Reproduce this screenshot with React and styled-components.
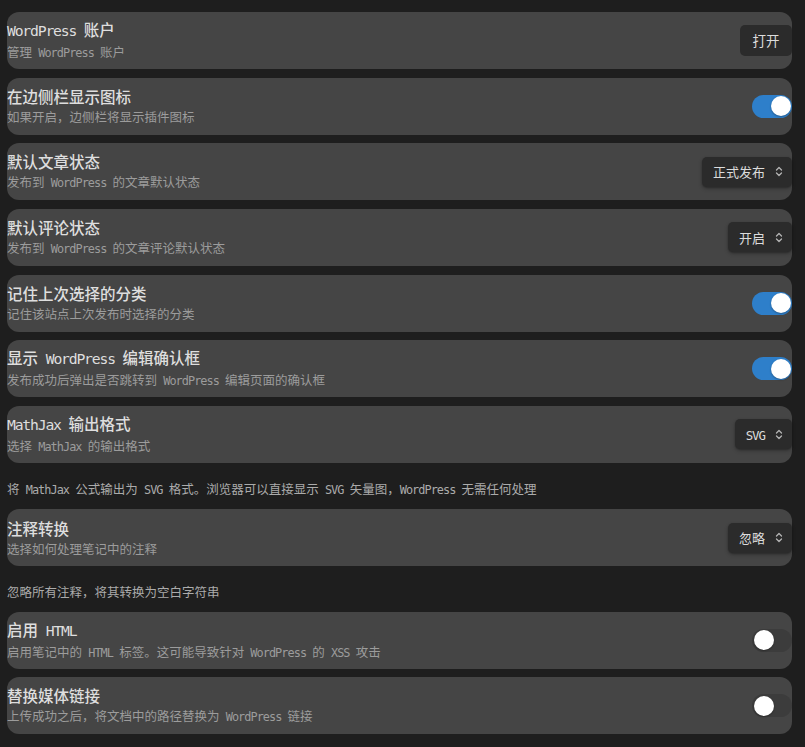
import React from 'react';
import styled, { createGlobalStyle } from 'styled-components';

const Global = createGlobalStyle`
  html, body { margin: 0; padding: 0; background: #1e1e1e; }
  body { font-family: "Noto Sans CJK SC", "DejaVu Sans Mono", sans-serif; }
  * { box-sizing: border-box; }
`;

const Page = styled.div`
  display: flex;
  flex-direction: column;
  gap: 8.67px;
  padding: 12px 13px 12px 7px;
`;

const Card = styled.div`
  display: flex;
  align-items: center;
  justify-content: space-between;
  background: #454545;
  border-radius: 12px;
  height: 57px;
`;

const Info = styled.div`
  display: flex;
  flex-direction: column;
  min-width: 0;
`;

const Name = styled.div`
  font-size: 15.5px;
  font-weight: 500;
  line-height: 20px;
  color: #dedede;
  white-space: nowrap;
`;

const Desc = styled.div`
  font-size: 12.5px;
  line-height: 18px;
  margin-top: 2px;
  color: #9c9c9c;
  white-space: nowrap;
`;

const Note = styled.div`
  font-size: 12.5px;
  line-height: 18px;
  padding: 8px 0 2px;
  color: #ababab;
  white-space: nowrap;
`;

const Latin = styled.span`
  font-family: "DejaVu Sans Mono", monospace;
  font-weight: 400;
  font-size: 0.95em;
  letter-spacing: -0.08em;
`;

const Button = styled.div`
  display: flex;
  align-items: center;
  height: 31px;
  padding: 0 12.5px;
  background: #2b2b2b;
  border-radius: 5px;
  color: #dcdcdc;
  font-size: 13.5px;
  flex-shrink: 0;
  margin-bottom: 1px;
`;

const Select = styled.div`
  display: flex;
  align-items: center;
  gap: 10px;
  height: 30px;
  padding: 0 9px 0 10.5px;
  background: #2b2b2b;
  border-radius: 5px;
  color: #dcdcdc;
  font-size: 13px;
  flex-shrink: 0;
  box-shadow: 0 2px 4px rgba(0, 0, 0, 0.2), 0 1px 2px rgba(0, 0, 0, 0.25);
`;

const Track = styled.div`
  display: flex;
  align-items: center;
  justify-content: ${(p) => (p.$on ? 'flex-end' : 'flex-start')};
  width: 40px;
  height: 23px;
  padding: 0 1.5px;
  border-radius: 12px;
  background: ${(p) => (p.$on ? '#2e7fca' : '#3c3c3c')};
  flex-shrink: 0;
`;

const Knob = styled.div`
  width: 20px;
  height: 20px;
  border-radius: 50%;
  background: #ffffff;
  box-shadow: 0 1px 2px rgba(0, 0, 0, 0.3);
`;

function Mixed({ text }) {
  return text
    .split(/([\x20-\x7E]+)/)
    .filter(Boolean)
    .map((p, i) => (/^[\x20-\x7E]+$/.test(p) ? <Latin key={i}>{p}</Latin> : <React.Fragment key={i}>{p}</React.Fragment>));
}

const Chevrons = () => (
  <svg width="8" height="11" viewBox="0 0 8 11" fill="none" stroke="#b4b4b4" strokeWidth="1.3" strokeLinecap="round" strokeLinejoin="round">
    <path d="M1.5 4 L4 1.5 L6.5 4" />
    <path d="M1.5 7 L4 9.5 L6.5 7" />
  </svg>
);

function Control({ c }) {
  if (c.type === 'button') return <Button>{c.label}</Button>;
  if (c.type === 'select')
    return (
      <Select>
        <span><Mixed text={c.value} /></span>
        <Chevrons />
      </Select>
    );
  return (
    <Track $on={c.on}>
      <Knob />
    </Track>
  );
}

const rows = [
  { name: 'WordPress 账户', desc: '管理 WordPress 账户', c: { type: 'button', label: '打开' } },
  { name: '在边侧栏显示图标', desc: '如果开启，边侧栏将显示插件图标', c: { type: 'toggle', on: true } },
  { name: '默认文章状态', desc: '发布到 WordPress 的文章默认状态', c: { type: 'select', value: '正式发布' } },
  { name: '默认评论状态', desc: '发布到 WordPress 的文章评论默认状态', c: { type: 'select', value: '开启' } },
  { name: '记住上次选择的分类', desc: '记住该站点上次发布时选择的分类', c: { type: 'toggle', on: true } },
  { name: '显示 WordPress 编辑确认框', desc: '发布成功后弹出是否跳转到 WordPress 编辑页面的确认框', c: { type: 'toggle', on: true } },
  {
    name: 'MathJax 输出格式',
    desc: '选择 MathJax 的输出格式',
    c: { type: 'select', value: 'SVG' },
    note: '将 MathJax 公式输出为 SVG 格式。浏览器可以直接显示 SVG 矢量图，WordPress 无需任何处理',
  },
  {
    name: '注释转换',
    desc: '选择如何处理笔记中的注释',
    c: { type: 'select', value: '忽略' },
    note: '忽略所有注释，将其转换为空白字符串',
  },
  { name: '启用 HTML', desc: '启用笔记中的 HTML 标签。这可能导致针对 WordPress 的 XSS 攻击', c: { type: 'toggle', on: false } },
  { name: '替换媒体链接', desc: '上传成功之后，将文档中的路径替换为 WordPress 链接', c: { type: 'toggle', on: false } },
];

export default function App() {
  return (
    <>
      <Global />
      <Page>
        {rows.map((r, i) => (
          <React.Fragment key={i}>
            <Card>
              <Info>
                <Name><Mixed text={r.name} /></Name>
                <Desc><Mixed text={r.desc} /></Desc>
              </Info>
              <Control c={r.c} />
            </Card>
            {r.note && <Note><Mixed text={r.note} /></Note>}
          </React.Fragment>
        ))}
      </Page>
    </>
  );
}
